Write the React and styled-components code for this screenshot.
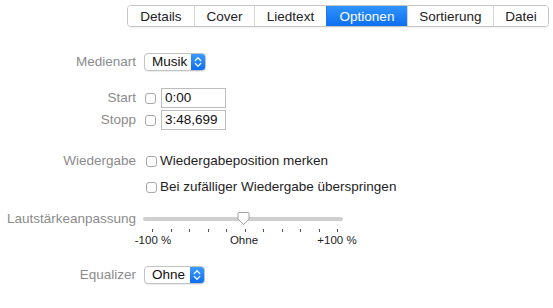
import React from "react";
import styled, { createGlobalStyle } from "styled-components";

const GlobalStyle = createGlobalStyle`
  html, body {
    margin: 0;
    padding: 0;
    background: #ffffff;
  }
  body {
    font-family: "Liberation Sans", Arial, sans-serif;
    font-size: 13.5px;
    color: #1e1e1e;
  }
`;

const Page = styled.div`
  width: 553px;
  height: 308px;
  display: flex;
  flex-direction: column;
  overflow: hidden;
`;

const TabBar = styled.div`
  display: flex;
  align-self: flex-start;
  margin: 5px 0 0 127px;
  height: 20px;
  border: 1px solid #c6c6c6;
  border-radius: 4px;
  overflow: hidden;
  box-shadow: 0 1px 0 rgba(0, 0, 0, 0.05);
`;

const Tab = styled.div`
  display: flex;
  align-items: center;
  justify-content: center;
  width: ${(p) => p.w}px;
  font-size: 13.5px;
  color: ${(p) => (p.active ? "#ffffff" : "#222")};
  background: ${(p) =>
    p.active ? "linear-gradient(#2f93fd, #0d6ff0)" : "#ffffff"};
  border-left: ${(p) => (p.first ? "none" : "1px solid #d6d6d6")};
  ${(p) => p.active && "border-left-color: #1a78f2;"}
`;

const Row = styled.div`
  display: flex;
  align-items: ${(p) => p.align || "center"};
  margin-top: ${(p) => p.top}px;
  min-height: ${(p) => p.h || 16}px;
`;

const Label = styled.div`
  width: 144px;
  flex-shrink: 0;
  text-align: right;
  color: #8b8b8b;
  font-size: 13.5px;
  line-height: 16px;
  padding-right: 8px;
  box-sizing: border-box;
  ${(p) => p.offset && `margin-top: ${p.offset}px;`}
`;

const Controls = styled.div`
  display: flex;
  align-items: center;
  gap: ${(p) => p.gap || 4}px;
  padding-left: ${(p) => p.indent || 0}px;
`;

const Select = styled.div`
  display: flex;
  align-items: stretch;
  height: 18px;
  width: ${(p) => p.w}px;
  box-sizing: border-box;
  border: 1px solid #c3c3c3;
  border-radius: 4px;
  background: #fff;
  box-shadow: 0 1px 1px rgba(0, 0, 0, 0.08);
  overflow: hidden;
`;

const SelectText = styled.span`
  flex: 1;
  padding-left: 7px;
  font-size: 13.5px;
  line-height: 16px;
  color: #111;
`;

const SelectArrow = styled.span`
  width: 14px;
  display: flex;
  align-items: center;
  justify-content: center;
  background: linear-gradient(#3b9bfd, #0d6ff1);
`;

const Checkbox = styled.span`
  width: 11px;
  height: 11px;
  box-sizing: border-box;
  border: 1px solid #a8a8a8;
  border-radius: 3px;
  background: #fff;
  flex-shrink: 0;
`;

const TimeField = styled.div`
  width: 65px;
  height: 20px;
  box-sizing: border-box;
  border: 1px solid #bdbdbd;
  padding-left: 3px;
  font-size: 13.5px;
  line-height: 18px;
  color: #111;
`;

const CheckText = styled.span`
  font-size: 13.5px;
  line-height: 16px;
  color: #1e1e1e;
`;

const Slider = styled.div`
  position: relative;
  width: 220px;
  height: 37px;
  margin-left: -1px;
`;

const Track = styled.div`
  position: absolute;
  left: 0;
  top: 7px;
  width: 200px;
  height: 4px;
  border-radius: 2px;
  background: #cfcfcf;
`;

const Thumb = styled.svg`
  position: absolute;
  left: 94px;
  top: 2px;
`;

const Tick = styled.span`
  position: absolute;
  top: 19px;
  width: 1px;
  height: 3px;
  background: #555;
`;

const TickLabel = styled.span`
  position: absolute;
  top: 24px;
  font-size: 11.5px;
  line-height: 13px;
  color: #222;
  transform: translateX(-50%);
  white-space: nowrap;
`;

const Chevrons = () => (
  <svg width="8" height="12" viewBox="0 0 8 12">
    <path
      d="M1.2 4.6 L4 1.8 L6.8 4.6 M1.2 7.4 L4 10.2 L6.8 7.4"
      fill="none"
      stroke="#fff"
      strokeWidth="1.3"
      strokeLinecap="round"
      strokeLinejoin="round"
    />
  </svg>
);

const tabs = [
  ["Details", 66],
  ["Cover", 59],
  ["Liedtext", 71],
  ["Optionen", 80],
  ["Sortierung", 85],
  ["Datei", 54],
];

const tickXs = Array.from({ length: 11 }, (_, i) => 9 + i * 18.5);

export default function App() {
  return (
    <>
      <GlobalStyle />
      <Page>
        <TabBar>
          {tabs.map(([t, w], i) => (
            <Tab key={t} w={w} first={i === 0} active={t === "Optionen"}>
              {t}
            </Tab>
          ))}
        </TabBar>

        <Row top={26} h={18}>
          <Label>Medienart</Label>
          <Select w={62}>
            <SelectText>Musik</SelectText>
            <SelectArrow>
              <Chevrons />
            </SelectArrow>
          </Select>
        </Row>

        <Row top={17} h={20}>
          <Label>Start</Label>
          <Controls gap={5} indent={1}>
            <Checkbox />
            <TimeField>0:00</TimeField>
          </Controls>
        </Row>
        <Row top={2} h={20}>
          <Label>Stopp</Label>
          <Controls gap={5} indent={1}>
            <Checkbox />
            <TimeField>3:48,699</TimeField>
          </Controls>
        </Row>

        <Row top={23}>
          <Label>Wiedergabe</Label>
          <Controls gap={3} indent={2}>
            <Checkbox />
            <CheckText>Wiedergabeposition merken</CheckText>
          </Controls>
        </Row>
        <Row top={10}>
          <Label />
          <Controls gap={3} indent={2}>
            <Checkbox />
            <CheckText>Bei zufälliger Wiedergabe überspringen</CheckText>
          </Controls>
        </Row>

        <Row top={15} align="flex-start" h={37}>
          <Label offset={1}>Lautstärkeanpassung</Label>
          <Slider>
            <Track />
            <Thumb width="13" height="14" viewBox="0 0 13 14">
              <path
                d="M1 1.5 Q1 0.5 2 0.5 L11 0.5 Q12 0.5 12 1.5 L12 7 L6.5 12.5 L1 7 Z"
                fill="#fff"
                stroke="#9a9a9a"
                strokeWidth="0.9"
              />
            </Thumb>
            {tickXs.map((x) => (
              <Tick key={x} style={{ left: x }} />
            ))}
            <TickLabel style={{ left: 10 }}>-100 %</TickLabel>
            <TickLabel style={{ left: 101 }}>Ohne</TickLabel>
            <TickLabel style={{ left: 194 }}>+100 %</TickLabel>
          </Slider>
        </Row>

        <Row top={19} h={18}>
          <Label>Equalizer</Label>
          <Select w={61}>
            <SelectText>Ohne</SelectText>
            <SelectArrow>
              <Chevrons />
            </SelectArrow>
          </Select>
        </Row>
      </Page>
    </>
  );
}
